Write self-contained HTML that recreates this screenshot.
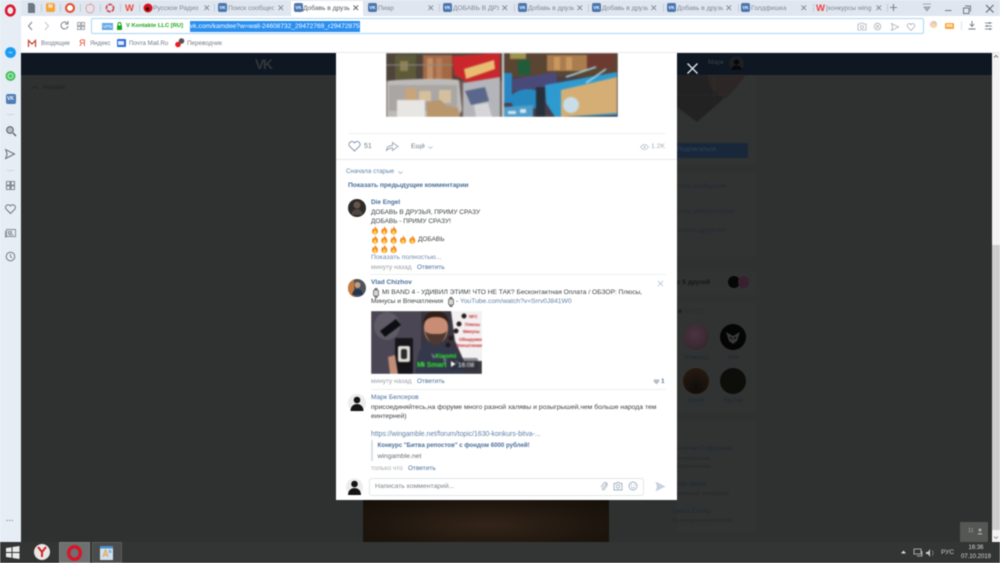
<!DOCTYPE html>
<html><head><meta charset="utf-8"><style>
*{box-sizing:border-box}
html,body{margin:0;padding:0;width:1000px;height:563px;overflow:hidden;background:#fff;font-family:"Liberation Sans","Noto Sans CJK SC",sans-serif}
#w{position:relative;width:1000px;height:563px;overflow:hidden;filter:blur(.45px)}
.a{position:absolute;white-space:nowrap}
.tab{position:absolute;top:0;height:16px;font-size:6.6px;line-height:17px;color:#7d8794;white-space:nowrap;overflow:hidden}
.vk{position:absolute;top:3px;width:9px;height:9px;border-radius:2px;background:#4a76b0;color:#fff;font-size:4.5px;line-height:9px;text-align:center;font-weight:bold}
.x{position:absolute;top:1px;font-size:9px;line-height:15px;color:#7b8490}
.sep{position:absolute;top:4px;width:1px;height:8px;background:#c3ccd8}
.t{font-size:6.7px;color:#333;line-height:9px}
.l{color:#4a6f9c}
.g{color:#9a9ea4}
.d{color:#3d4144}
.bm{font-size:6.1px;line-height:9px;color:#737a83;top:39px}
svg{position:absolute;overflow:visible}
</style></head><body><div id="w">

<!-- chrome -->
<div class="a" style="left:0;top:0;width:1000px;height:16px;background:#dfe6ef"></div>
<div class="a" style="left:0;top:0;width:21px;height:543px;background:#e6edf5"></div>
<div class="a" style="left:21px;top:16px;width:979px;height:36px;background:#fff"></div>
<div class="a" style="left:21px;top:52px;width:979px;height:1px;background:#e5e8ec"></div>

<!-- opera logo -->
<svg style="left:4px;top:4px" width="13" height="14"><ellipse cx="6.3" cy="6.5" rx="4.2" ry="4.8" fill="none" stroke="#e0162b" stroke-width="2.6"/></svg>

<!-- tab strip icons -->
<svg style="left:27px;top:3px" width="9" height="10"><path d="M1 0h5l2 2v8H1z" fill="#6d7783"/></svg>
<div class="sep" style="left:41px"></div>
<div class="a" style="left:46px;top:3px;width:9px;height:9px;background:#f4a53a;border-radius:2px;color:#fff;font-size:5px;line-height:9px;text-align:center;font-weight:bold">M</div>
<div class="sep" style="left:60px"></div>
<svg style="left:65px;top:3px" width="10" height="10"><circle cx="5" cy="5" r="4" fill="#fff" stroke="#e8482a" stroke-width="2"/></svg>
<div class="sep" style="left:80px"></div>
<svg style="left:85px;top:3px" width="10" height="10"><path d="M5 2C3 1 1 2 1 5s2 5 3 5l1-.5L6 10c1 0 3-2 3-5S7 1 5 2zM5 2l1-2" fill="none" stroke="#e79a98" stroke-width=".9"/></svg>
<div class="sep" style="left:100px"></div>
<svg style="left:105px;top:3px" width="10" height="10"><circle cx="5" cy="5" r="3.6" fill="none" stroke="#d5424b" stroke-width="1.6" stroke-dasharray="4 1"/></svg>
<div class="sep" style="left:120px"></div>
<div class="a" style="left:125px;top:3px;color:#f0473e;font-size:9.5px;font-weight:bold;line-height:11px">W</div>
<div class="sep" style="left:139px"></div>

<!-- tabs -->
<svg style="left:143px;top:3px" width="10" height="10"><circle cx="5" cy="5" r="4.5" fill="#d8131c"/><circle cx="4.5" cy="6" r="1.8" fill="#3a1010"/></svg>
<div class="tab" style="left:153px;width:46px">Русское Радио –</div>
<div class="x" style="left:203px">✕</div>
<div class="sep" style="left:214px"></div>
<div class="vk" style="left:218px">VK</div>
<div class="tab" style="left:228px;width:46px">Поиск сообщес</div>
<div class="x" style="left:277px">✕</div>
<div class="a" style="left:291px;top:1px;width:72px;height:15px;background:#fff"></div>
<div class="vk" style="left:294px">VK</div>
<div class="tab" style="left:303px;width:47px;color:#4e5661">Добавь в друзья</div>
<div class="x" style="left:352px;color:#555">✕</div>
<div class="vk" style="left:368px">VK</div>
<div class="tab" style="left:378px;width:40px">Пиар</div>
<div class="x" style="left:427px">✕</div>
<div class="sep" style="left:439px"></div>
<div class="vk" style="left:443px">VK</div>
<div class="tab" style="left:453px;width:46px">ДОБАВЬ В ДРУЗ</div>
<div class="x" style="left:501px">✕</div>
<div class="sep" style="left:514px"></div>
<div class="vk" style="left:518px">VK</div>
<div class="tab" style="left:528px;width:46px">Добавь в друзья</div>
<div class="x" style="left:576px">✕</div>
<div class="sep" style="left:588px"></div>
<div class="vk" style="left:592px">VK</div>
<div class="tab" style="left:602px;width:46px">Добавь в друзья</div>
<div class="x" style="left:650px">✕</div>
<div class="sep" style="left:663px"></div>
<div class="vk" style="left:667px">VK</div>
<div class="tab" style="left:677px;width:46px">Добавь в друзья</div>
<div class="x" style="left:725px">✕</div>
<div class="sep" style="left:738px"></div>
<div class="vk" style="left:741px">VK</div>
<div class="tab" style="left:751px;width:46px">Голдфишка</div>
<div class="x" style="left:800px">✕</div>
<div class="sep" style="left:813px"></div>
<div class="a" style="left:816px;top:3px;color:#ef3f3f;font-size:9.5px;font-weight:bold;line-height:11px">W</div>
<div class="tab" style="left:826px;width:46px">[конкурсы wing</div>
<div class="x" style="left:875px">✕</div>
<div class="sep" style="left:887px"></div>
<svg style="left:889px;top:3px" width="9" height="9"><path d="M4.5 1v7M1 4.5h7" stroke="#7a8491" stroke-width="1.1"/></svg>
<svg style="left:923px;top:3px" width="9" height="9"><path d="M0 1h8M1 4h6l-3 4z" stroke="#8d96a1" fill="#aab2bc" stroke-width=".8"/></svg>
<svg style="left:945px;top:5px" width="80" height="10"><path d="M0 5.500h6.500" stroke="#727b86" stroke-width="1"/><path d="M20 1h5.500v5.500M18.500 3h5.500v5.500h-5.500z" stroke="#727b86" fill="none" stroke-width="1"/><path d="M41 0l7.500 7.500M48.500 0l-7.500 7.500" stroke="#5e6771" stroke-width="1.1"/></svg>

<!-- nav -->
<svg style="left:27px;top:21px" width="70" height="10"><path d="M5 1L1.500 5 5 9" stroke="#7b8490" fill="none" stroke-width="1"/><path d="M18 1l3.500 4L18 9" stroke="#c3c9d0" fill="none" stroke-width="1"/><path d="M40 2a3.500 3.500 0 1 0 1 3M41 0v3h-3" stroke="#7b8490" fill="none" stroke-width="1"/></svg>
<svg style="left:77px;top:22px" width="8" height="8"><path d="M.5.500h3v3h-3zM4.500.500h3v3h-3zM.5 4.500h3v3h-3zM4.500 4.500h3v3h-3z" stroke="#80888f" fill="none" stroke-width=".7"/></svg>
<div class="a" style="left:91px;top:18px;width:833px;height:16px;border:1px solid #a9d6f7;border-radius:2px;background:#fff"></div>
<div class="a" style="left:102px;top:23px;width:11px;height:7px;background:#5ea7e8;color:#fff;font-size:4.5px;line-height:7px;text-align:center">VPN</div>
<svg style="left:116px;top:22px" width="7" height="8"><path d="M1 3.500h5V8H1z" fill="#1ea51d"/><path d="M2 3.500V2a1.500 1.500 0 0 1 3 0v1.500" stroke="#1ea51d" fill="none"/></svg>
<div class="a" style="left:126px;top:21px;font-size:5.8px;line-height:11px;font-weight:bold;color:#1ea51d">V Kontakte LLC [RU]</div>
<div class="a" style="left:189.5px;top:21px;width:170px;height:11px;background:#2b8ff0"></div>
<div class="a" style="left:190px;top:21px;font-size:6.6px;line-height:11px;color:#fff">vk.com/kamdee?w=wall-24608732_29472769_r29472875</div>
<svg style="left:857px;top:22px" width="100" height="10"><path d="M1 2h2l1-1h2l1 1h2v6H1z" stroke="#aab1b9" fill="none" stroke-width=".8"/><circle cx="5" cy="5" r="1.500" fill="none" stroke="#aab1b9" stroke-width=".8"/><circle cx="20.500" cy="4.500" r="3.300" fill="none" stroke="#aab1b9" stroke-width=".8"/><path d="M19 3l3 3M22 3l-3 3" stroke="#aab1b9" stroke-width=".8"/><path d="M34.500 1.500l7 3.500-7 3.500 1.200-3.500z" stroke="#aab1b9" fill="none" stroke-width=".8"/><path d="M54 8.500l-3.500-3.700a2 2 0 0 1 3.500-2.200 2 2 0 0 1 3.500 2.200z" stroke="#aab1b9" fill="none" stroke-width=".8"/></svg>
<svg style="left:929px;top:20px" width="12" height="12"><circle cx="4.500" cy="4.500" r="3.500" fill="#f5c0c5"/><path d="M4 1a3.500 3.500 0 0 1 4 3z" fill="#86d8c1"/><circle cx="4.500" cy="6" r="2" fill="#f6e08f"/></svg>
<div class="a" style="left:945px;top:23px;width:9px;height:6px;background:#f6a53b;border-radius:1px;color:#fff;font-size:4.5px;line-height:6px;text-align:center;font-weight:bold">M6</div>
<div class="a" style="left:961px;top:21px;width:1px;height:9px;background:#dde1e5"></div>
<svg style="left:968px;top:21px" width="8" height="9"><path d="M4 0v5M1.800 3L4 5.500 6.200 3M.5 8h7" stroke="#6e7780" fill="none" stroke-width=".9"/></svg>
<svg style="left:985px;top:22px" width="8" height="8"><path d="M0 1h7M0 4h7M0 7h7" stroke="#8a919a"/><path d="M4.500 0v2M2 3v2M5 6v2" stroke="#6e7780"/></svg>

<!-- bookmarks -->
<svg style="left:28px;top:40px" width="8" height="7"><path d="M.5 7V.5L4 4 7.500.500V7" fill="none" stroke="#c8392e" stroke-width="1.2"/></svg>
<div class="a bm" style="left:41px">Входящие</div>
<div class="a" style="left:79px;top:38px;color:#e8432d;font-size:9px;line-height:11px">Я</div>
<div class="a bm" style="left:90px">Яндекс</div>
<div class="a" style="left:116.5px;top:39px;width:9px;height:8px;background:#2a6bd9;border-radius:1px"></div>
<div class="a" style="left:118px;top:41px;width:6px;height:4px;background:#dfe9fb"></div>
<div class="a bm" style="left:129px">Почта Mail.Ru</div>
<svg style="left:175px;top:38px" width="10" height="10"><circle cx="3" cy="6.500" r="2.800" fill="#ec1c24"/><circle cx="6.500" cy="3" r="2.800" fill="#555"/></svg>
<div class="a bm" style="left:187px;font-size:6.3px">Переводчик</div>

<!-- sidebar icons -->
<svg style="left:4px;top:45.500px" width="14" height="14"><circle cx="6.500" cy="6.500" r="5.400" fill="#1a9cf0"/><path d="M3.800 7.500l2-2 1.500 1.200 2-1.500-2 2.300-1.500-1.200z" fill="#fff"/></svg>
<svg style="left:4px;top:70px" width="14" height="14"><circle cx="6.500" cy="6" r="5" fill="#43c15d"/><circle cx="6.500" cy="6" r="2.400" fill="none" stroke="#d9f5de"/></svg>
<div class="a" style="left:5.5px;top:94px;width:10px;height:10px;background:#4c7bb6;border-radius:2px;color:#fff;font-size:5px;line-height:10px;text-align:center;font-weight:bold">VK</div>
<div class="a" style="left:7px;top:114px;width:7px;height:1px;background:#cfd6de"></div>
<svg style="left:5px;top:125px" width="12" height="12"><circle cx="5" cy="5" r="3.300" fill="#b6bcc4" stroke="#5d6670" stroke-width="1.1"/><path d="M8 8l3 3" stroke="#5d6670" stroke-width="1.500"/></svg>
<svg style="left:5px;top:149px" width="11" height="11"><path d="M.7.700L9.500 5 .7 9.500l1.400-4.500z" fill="none" stroke="#636c76"/></svg>
<div class="a" style="left:7px;top:170px;width:7px;height:1px;background:#cfd6de"></div>
<svg style="left:6px;top:181px" width="9" height="9"><path d="M.5.500h3.500v3.500H.5zM5 .5h3.500v3.500H5zM.5 5h3.500v3.500H.5zM5 5h3.500v3.500H5z" fill="none" stroke="#636c76" stroke-width=".8"/></svg>
<svg style="left:5px;top:204px" width="11" height="10"><path d="M5.500 9.500L1 5a2.500 2.500 0 0 1 4.500-3A2.500 2.500 0 0 1 10 5z" fill="none" stroke="#636c76" stroke-width=".9"/></svg>
<svg style="left:5px;top:228px" width="11" height="10"><path d="M1.500 1.500h9v7h-9zM.5 3v6h1M3.500 3.500h3v2h-3zM3.500 6.800h5" fill="none" stroke="#636c76" stroke-width=".7"/></svg>
<svg style="left:5px;top:251px" width="11" height="11"><circle cx="5.500" cy="5.500" r="4.300" fill="none" stroke="#636c76" stroke-width=".9"/><path d="M5.500 3v2.800l1.800 1" fill="none" stroke="#636c76" stroke-width=".8"/></svg>
<div class="a" style="left:6px;top:518px;color:#70777f;font-size:7px;letter-spacing:.3px;line-height:8px;font-weight:bold">···</div>

<!-- page dim -->
<div class="a" style="left:21px;top:53px;width:971px;height:490px;background:#2f3130"></div>
<div class="a" style="left:21px;top:53px;width:971px;height:22px;background:#0e1722"></div>
<div class="a" style="left:255px;top:57px;color:#33373b;font-size:14px;line-height:15px;font-weight:bold;letter-spacing:-1.500px">VK</div>
<svg style="left:31px;top:85px" width="8" height="5"><path d="M.5 4L4 1l3.500 3" fill="none" stroke="#232526"/></svg>
<div class="a" style="left:43px;top:83px;font-size:6.5px;line-height:9px;color:#1f2122">Назара</div>
<div class="a" style="left:708px;top:58px;font-size:6.5px;line-height:9px;color:#3c4147">Марк</div>
<svg style="left:729px;top:56px" width="16" height="16"><circle cx="7.500" cy="7.500" r="7.500" fill="#1d2023"/><circle cx="7.500" cy="6" r="2.800" fill="#070809"/><path d="M2.500 14c0-4 3-4.500 5-4.500s5 .5 5 4.500z" fill="#070809"/></svg>
<svg style="left:687px;top:63px" width="11" height="11"><path d="M.5.500l10 10M10.500.500l-10 10" stroke="#dfe3e6" stroke-width="1.4"/></svg>

<!-- right column panels -->
<div class="a" style="left:677px;top:75px;width:80px;height:90px;background:#313332"></div>
<svg style="left:677px;top:75px;filter:blur(.6px)" width="88" height="50"><path d="M0 0h68C60 12 40 30 20 47L0 32z" fill="#222222"/><path d="M30 0h38C64 8 56 16 48 24L34 14z" fill="#2c2725"/><path d="M37 0v33M0 20h48" stroke="#353535" stroke-width=".4"/></svg>
<div class="a" style="left:677px;top:143px;width:71px;height:15px;background:#182739;border-radius:0 2px 2px 0"></div>
<div class="a" style="left:677px;top:145px;font-size:6.5px;line-height:10px;color:#34465a">Подписаться</div>
<div class="a" style="left:677px;top:173px;width:80px;height:84px;background:#313332"></div>
<div class="a" style="left:678px;top:182px;font-size:6.5px;line-height:10px;color:#1d2a3a">сать сообщение</div>
<div class="a" style="left:678px;top:207px;font-size:6.6px;line-height:10px;color:#222a33">чать уведомления</div>
<div class="a" style="left:678px;top:226px;font-size:6.6px;line-height:10px;color:#222a33">казать друзьям</div>
<div class="a" style="left:677px;top:271px;width:80px;height:24px;background:#313332"></div>
<div class="a" style="left:677px;top:278px;font-size:6.5px;line-height:10px;color:#141618;font-weight:bold">с 5 друзей</div>
<div class="a" style="left:728px;top:276px;width:12px;height:12px;border-radius:50%;background:#060606"></div>
<div class="a" style="left:738px;top:276px;width:11px;height:12px;border-radius:50%;background:#38202e"></div>
<div class="a" style="left:677px;top:302px;width:80px;height:110px;background:#313332"></div>
<div class="a" style="left:678px;top:307px;font-size:6.5px;line-height:10px;color:#141618;font-weight:bold">и <span style="color:#2a2d2f;font-weight:normal">664232</span></div>
<div class="a" style="left:683px;top:324px;width:26px;height:26px;border-radius:50%;background:radial-gradient(circle at 45% 40%,#4a3440,#2f2229)"></div>
<div class="a" style="left:720px;top:324px;width:26px;height:26px;border-radius:50%;background:#050505"></div>
<svg style="left:726px;top:331px" width="14" height="14"><path d="M0 1l7 4 7-4-3 9-4 3-4-3z" fill="#383838"/><path d="M4 6l2 2M10 6l-2 2" stroke="#050505"/></svg>
<div class="a" style="left:683px;top:354px;width:26px;text-align:center;font-size:6px;line-height:9px;color:#1c2936">Жамшид</div>
<div class="a" style="left:720px;top:354px;width:26px;text-align:center;font-size:6px;line-height:9px;color:#1c2936">Alex</div>
<div class="a" style="left:683px;top:368px;width:26px;height:26px;border-radius:50%;background:radial-gradient(circle at 50% 80%,#0f0c0a,#2b1d12)"></div>
<div class="a" style="left:720px;top:368px;width:26px;height:26px;border-radius:50%;background:#0d0d0a"></div>
<div class="a" style="left:683px;top:397px;width:26px;text-align:center;font-size:6px;line-height:9px;color:#1c2936">Денис</div>
<div class="a" style="left:720px;top:397px;width:26px;text-align:center;font-size:6px;line-height:9px;color:#1c2936">Руслан</div>
<div class="a" style="left:677px;top:421px;width:80px;height:112px;background:#313332"></div>
<div class="a" style="left:677px;top:444px;font-size:6.5px;line-height:10px;color:#1c2936">чеслав Софронов</div>
<div class="a" style="left:677px;top:455px;font-size:5.8px;line-height:9px;color:#25282a">интересным</div>
<div class="a" style="left:677px;top:463px;font-size:5.8px;line-height:9px;color:#25282a">едложениям</div>
<div class="a" style="left:677px;top:480px;font-size:6.5px;line-height:10px;color:#1c2936">stle Media</div>
<div class="a" style="left:677px;top:490px;font-size:5.8px;line-height:9px;color:#25282a">ктамный менеджер</div>
<div class="a" style="left:672px;top:507px;font-size:6.5px;line-height:10px;color:#1c2936">Света Скляр</div>
<div class="a" style="left:672px;top:517px;font-size:5.8px;line-height:9px;color:#25282a">По вопросам контента</div>
<!-- lower centre hint image -->
<div class="a" style="left:363px;top:500px;width:246px;height:42px;background:radial-gradient(ellipse at 50% 60%,#33241a 0%,#1f170f 60%,#141009 100%)"></div>
<!-- scrollbar -->
<div class="a" style="left:992px;top:53px;width:8px;height:490px;background:#f3f3f3"></div>
<div class="a" style="left:992px;top:245px;width:8px;height:285px;background:#cdcdcd"></div>
<svg style="left:993px;top:54px" width="6" height="5"><path d="M1 3.500L3 1.500l2 2" fill="none" stroke="#777"/></svg>
<svg style="left:993px;top:535px" width="6" height="5"><path d="M1 1.500L3 3.500l2-2" fill="none" stroke="#999"/></svg>
<div class="a" style="left:960px;top:522px;width:28px;height:20px;background:#555755;border-radius:1px"></div>
<div class="a" style="left:968px;top:527px;font-size:5.5px;line-height:9px;color:#a8aaa8">11</div>
<svg style="left:977px;top:528px" width="6" height="7"><circle cx="3" cy="2" r="1.500" fill="#a8aaa8"/><path d="M.5 6.500c0-2 5-2 5 0z" fill="#a8aaa8"/></svg>

<!-- modal -->
<div class="a" style="left:336px;top:53px;width:341px;height:447px;background:#fff"></div>
<!-- photos -->
<div class="a" style="left:386px;top:53px;width:232px;height:64px;overflow:hidden">
<svg style="left:0;top:0;filter:blur(.9px)" width="232" height="64">
<rect width="116" height="64" fill="#6a5a55"/>
<rect x="0" y="0" width="116" height="28" fill="#4e443a"/>
<rect x="9" y="2" width="21" height="24" fill="#5d5a3a"/>
<rect x="14" y="8" width="8" height="10" fill="#8c8050"/>
<rect x="37" y="2" width="29" height="25" fill="#a06a48"/>
<rect x="41" y="5" width="6" height="21" fill="#c28c64"/><rect x="50" y="5" width="6" height="21" fill="#b87c56"/><rect x="59" y="5" width="5" height="21" fill="#a8683f"/>
<path d="M0 12h80" stroke="#8c8a88" stroke-width="1"/>
<path d="M66 3L114 0v25L85 31 68 22z" fill="#c9272b"/>
<path d="M78 16l30-9 1 9-29 10z" fill="#e8bd72"/>
<path d="M1 28c12-2 60-3 72-1l3 30-4 7H1z" fill="#bdbbb9"/>
<path d="M3 32h68v26H3z" fill="#a9a6a3"/>
<rect x="19" y="35" width="12" height="13" fill="#c6a47c"/><rect x="33" y="38" width="12" height="10" fill="#d6bf9c"/><rect x="53" y="37" width="12" height="13" fill="#d4c0a0"/>
<path d="M41 49l14-2 5 6 12 2 2 9H41z" fill="#b9966c"/>
<rect x="11" y="47" width="28" height="17" fill="#e8e6e3"/>
<path d="M77 30l37-6v40H77z" fill="#b4b5ba"/>
<path d="M79 38l20-4 4 14-18 4z" fill="#5b678a"/>
<path d="M88 52l14-2 4 14H90z" fill="#d6d6d8"/>
<rect x="118" y="0" width="114" height="64" fill="#463f4a"/>
<rect x="118" y="0" width="114" height="24" fill="#594532"/>
<rect x="124" y="0" width="16" height="6" fill="#9f9350"/>
<rect x="132" y="7" width="12" height="15" fill="#1f5d3a"/>
<rect x="161" y="2" width="40" height="16" fill="#ab7c4e"/>
<rect x="168" y="4" width="6" height="13" fill="#c9985f"/><rect x="180" y="4" width="6" height="13" fill="#c9985f"/>
<rect x="201" y="0" width="27" height="16" fill="#6d3a30"/>
<rect x="117" y="20" width="9" height="30" fill="#2a87c4"/>
<path d="M127 26l43-7 1 14-44 5z" fill="#4a4a7a"/>
<path d="M126 42c6-7 22-7 28-3l1 15c-8 3-24 3-29-2z" fill="#2589c0"/>
<path d="M117 54l30-2v12h-30z" fill="#4f9cc9"/>
<path d="M122 58h8v3h-8zM134 56h6v4h-6z" fill="#d3e6f1"/>
<rect x="150" y="34" width="9" height="30" fill="#27303a"/>
<path d="M159 32l72-13v43l-62 2-9-14z" fill="#2f9ad0"/>
<path d="M175 37l56-13v36l-56 4z" fill="#d4ae74"/>
<path d="M180 24l30-10M200 30l20-14" stroke="#a8dcf2" stroke-width="1.500"/>
<circle cx="185" cy="52" r="8" fill="#c8dde8"/>
<rect x="116" width="2" height="64" fill="#d8d8d8"/>
</svg></div>

<div class="a" style="left:349px;top:133px;width:316px;height:1px;background:#eceef1"></div>
<svg style="left:348px;top:140px" width="13" height="12"><path d="M6.500 11L1.300 6A3 3 0 0 1 6.500 3a3 3 0 0 1 5.200 3z" fill="none" stroke="#8a9bb0" stroke-width="1"/></svg>
<div class="a" style="left:364px;top:142px;font-size:7px;line-height:10px;color:#727a84">51</div>
<svg style="left:386px;top:141px" width="13" height="11"><path d="M.5 9.500c0-3 2-5 6-5V1.500l5.500 4-5.500 4V7c-2 0-4 .5-6 2.500z" fill="none" stroke="#9aa7b6" stroke-width=".9"/></svg>
<div class="a" style="left:411px;top:142px;font-size:6.8px;line-height:10px;color:#727a84">Ещё</div>
<svg style="left:428px;top:146px" width="5" height="3"><path d="M.5.500L2.500 2.500 4.500.500" stroke="#a8b2bd" fill="none" stroke-width=".7"/></svg>
<svg style="left:640px;top:144px" width="9" height="6"><path d="M.5 3C2 1 3 .5 4.500.5S7 1 8.500 3C7 5 6 5.500 4.500 5.500S2 5 .5 3z" fill="none" stroke="#b5bcc4" stroke-width=".7"/><circle cx="4.500" cy="3" r="1" fill="#b5bcc4"/></svg>
<div class="a" style="left:651px;top:142px;font-size:6.8px;line-height:10px;color:#a4acb5">1.2K</div>
<div class="a" style="left:336px;top:159px;width:341px;height:1px;background:#e7e9ec"></div>

<div class="a" style="left:346px;top:166.500px;font-size:6.3px;line-height:10px;color:#5f82a8">Сначала старые</div>
<svg style="left:398px;top:170.500px" width="5" height="3"><path d="M.5.500L2.500 2.500 4.500.500" stroke="#93a4b6" fill="none" stroke-width=".7"/></svg>
<div class="a" style="left:348px;top:181px;font-size:6.8px;line-height:10px;color:#4a6f9c;font-weight:bold;letter-spacing:-.1px">Показать предыдущие комментарии</div>

<!-- comment 1 -->
<svg style="left:348px;top:199px" width="18" height="18"><circle cx="9" cy="9" r="9" fill="#2d2a28"/><circle cx="9" cy="6" r="3.500" fill="#66544a"/><path d="M3 16c1-5 4-6 6-6s5 1 6 6z" fill="#4d4641"/></svg>
<div class="a" style="left:371px;top:198px;font-size:6.4px;line-height:10px;color:#4a6f9c;font-weight:bold">Die Engel</div>
<div class="a d" style="left:371px;top:208px;font-size:6.5px;line-height:9px">ДОБАВЬ В ДРУЗЬЯ, ПРИМУ СРАЗУ</div>
<div class="a d" style="left:371px;top:217px;font-size:6.5px;line-height:9px">ДОБАВЬ - ПРИМУ СРАЗУ!</div>
<svg style="left:371px;top:225.500px" width="85" height="28"><defs><g id="f"><path d="M4 0c1 2 3 3 3 5.500A3 3 0 0 1 4 8.500a3 3 0 0 1-3-3C1 4 2 3 2 2c.7.500 1 1 1 1.500C3.500 2.500 4 1.500 4 0z" fill="#f58a1f"/><path d="M4 4c.8 1 1.600 1.500 1.600 2.500a1.600 1.600 0 0 1-3.200 0C2.400 5.500 3.500 5 4 4z" fill="#ffd34e"/></g></defs>
<use href="#f" x="0" y="0"/><use href="#f" x="9.300" y="0"/><use href="#f" x="18.600" y="0"/>
<use href="#f" x="0" y="9.300"/><use href="#f" x="9.300" y="9.300"/><use href="#f" x="18.600" y="9.300"/><use href="#f" x="28" y="9.300"/><use href="#f" x="37.300" y="9.300"/>
<use href="#f" x="0" y="18.600"/><use href="#f" x="9.300" y="18.600"/><use href="#f" x="18.600" y="18.600"/></svg>
<div class="a d" style="left:418px;top:235px;font-size:6.5px;line-height:9px">ДОБАВЬ</div>
<div class="a l" style="left:371px;top:252.500px;font-size:6.8px;line-height:9px;color:#6f8eb0">Показать полностью...</div>
<div class="a g" style="left:371px;top:262.500px;font-size:6.5px;line-height:9px">минуту назад</div>
<div class="a l" style="left:417px;top:262.500px;font-size:6.5px;line-height:9px">Ответить</div>
<div class="a" style="left:371px;top:274px;width:295px;height:1px;background:#eceef1"></div>

<!-- comment 2 -->
<svg style="left:348px;top:279px" width="18" height="18"><circle cx="9" cy="9" r="9" fill="#4a5560"/><path d="M0 9A9 9 0 0 1 6 .5V18A9 9 0 0 1 0 9z" fill="#c77c3f"/><circle cx="9.500" cy="6" r="3" fill="#c79a7a"/><path d="M4 16c1-5 3-6 5.500-6s4.500 1 5.500 6z" fill="#27364c"/></svg>
<div class="a" style="left:371px;top:278px;font-size:6.5px;line-height:10px;color:#4a6f9c;font-weight:bold">Vlad Chizhov</div>
<svg style="left:657px;top:280px" width="7" height="7"><path d="M1 1l5 5M6 1L1 6" stroke="#bfd0df" stroke-width="1"/></svg>
<svg style="left:373px;top:288px" width="6" height="10"><rect x=".5" y="2" width="5" height="6" rx="1" fill="#d5d5d5" stroke="#555" stroke-width=".7"/><rect x="1.500" y="0" width="3" height="2" fill="#777"/><rect x="1.500" y="8" width="3" height="2" fill="#777"/></svg>
<div class="a d" style="left:382px;top:288px;font-size:6.65px;line-height:9px">MI BAND 4 - УДИВИЛ ЭТИМ! ЧТО НЕ ТАК? Бесконтактная Оплата / ОБЗОР: Плюсы,</div>
<div class="a t d" style="left:371px;top:297px">Минусы и Впечатления</div>
<svg style="left:448px;top:297px" width="6" height="10"><rect x=".5" y="2" width="5" height="6" rx="1" fill="#d5d5d5" stroke="#555" stroke-width=".7"/><rect x="1.500" y="0" width="3" height="2" fill="#777"/><rect x="1.500" y="8" width="3" height="2" fill="#777"/></svg>
<div class="a t" style="left:456px;top:297px;color:#333">- <span style="color:#5f82a8">YouTube.com/watch?v=Srrv0J841W0</span></div>

<!-- video thumb -->
<div class="a" style="left:371px;top:311px;width:111px;height:63px;overflow:hidden">
<svg style="left:0;top:0;filter:blur(.4px)" width="111" height="63">
<rect width="111" height="63" fill="#3a3640"/>
<rect width="50" height="63" fill="#4b4654"/>
<path d="M80 0h31v50H93L84 30z" fill="#f2f0f0"/>
<ellipse cx="16" cy="15" rx="13" ry="14" fill="#5e5a66"/>
<path d="M9 20l16-12 5 6-16 12z" fill="#0d0e13"/>
<path d="M44 63C46 42 50 32 58 30h16c8 3 16 14 18 33z" fill="#33394a"/>
<path d="M50 50l4 3-3 3zM60 42l5 3-3 3zM72 46l4 3-3 3zM84 48l4 3-3 3z" fill="#6a7286"/>
<ellipse cx="65" cy="17" rx="12" ry="16" fill="#c98d74"/>
<path d="M52 14c0-10 6-14 13-14s13 4 13 14c-3-6-6-8-13-8s-10 2-13 8z" fill="#2d2019"/>
<path d="M54 20c2 8 6 14 11 14s9-6 11-14c-3 3-6 3-11 3s-8 0-11-3z" fill="#4d392f"/>
<rect x="24" y="27" width="18" height="36" rx="1" fill="#16161a"/>
<rect x="27" y="35" width="12" height="16" rx="2" fill="#e2dfd8"/>
<rect x="30" y="38" width="6" height="10" rx="2" fill="#2b2b2b"/>
<path d="M17 46l7-2 3 19H19z" fill="#c18e78"/>
<g fill="#26181c"><circle cx="93" cy="5" r="2.500"/><circle cx="88" cy="13" r="2.500"/><circle cx="85" cy="20" r="2.500"/><circle cx="80" cy="27" r="2.500"/><circle cx="77" cy="34" r="2.500"/></g>
<g font-family="Liberation Sans,sans-serif" font-size="4.2" fill="#c8222a" font-weight="bold">
<text x="98" y="7">NFC</text><text x="94" y="15">Плюсы</text><text x="92" y="22">Минусы</text><text x="88" y="30">Обнаружен</text><text x="85" y="36">Впечатления</text></g>
<rect x="79" y="47" width="28" height="12" rx="2" fill="#2a2f38" opacity=".55"/>
<text x="64" y="47" font-family="Liberation Sans,sans-serif" font-size="6.5" fill="#2ee82b" font-weight="bold">Xiaomi</text>
<text x="46" y="56" font-family="Liberation Sans,sans-serif" font-size="7" fill="#2ee82b" font-weight="bold">Mi Smart</text>
<path d="M80 50l4.500 3-4.500 3z" fill="#fff"/>
<text x="87" y="56" font-family="Liberation Sans,sans-serif" font-size="6.5" fill="#fff">16:08</text>
</svg></div>
<div class="a g" style="left:371px;top:377px;font-size:6.5px;line-height:9px">минуту назад</div>
<div class="a l" style="left:417px;top:377px;font-size:6.5px;line-height:9px">Ответить</div>
<svg style="left:653px;top:378px" width="7" height="7"><path d="M3.500 6.500L.7 3.500A1.600 1.600 0 0 1 3.500 2 1.600 1.600 0 0 1 6.300 3.500z" fill="#b5bcc5"/></svg>
<div class="a" style="left:661px;top:376.500px;font-size:6.5px;line-height:9px;color:#717982;font-weight:bold">1</div>
<div class="a" style="left:371px;top:388.500px;width:295px;height:1px;background:#eceef1"></div>

<!-- comment 3 -->
<svg style="left:348px;top:394px" width="18" height="18"><circle cx="9" cy="9" r="9" fill="#ececec"/><circle cx="9" cy="6" r="3.300" fill="#151515"/><path d="M2.500 17c0-5 3.500-7 6.500-7s6.500 2 6.500 7z" fill="#151515"/></svg>
<div class="a" style="left:371px;top:393px;font-size:6.7px;line-height:10px;color:#4a6f9c">Марк Белсеров</div>
<div class="a d" style="left:371px;top:402.500px;font-size:6.8px;line-height:9px">присоединяйтесь,на форуме много разной халявы и розыгрышей,чем больше народа тем</div>
<div class="a d" style="left:371px;top:412px;font-size:6.8px;line-height:9px">еинтерней)</div>
<div class="a" style="left:371px;top:430px;font-size:6.9px;line-height:9px;color:#5f82a8">https://wingamble.net/forum/topic/1630-konkurs-bitva-...</div>
<div class="a" style="left:371px;top:440px;width:2px;height:21px;background:#dde3ea"></div>
<div class="a" style="left:377.5px;top:440.500px;font-size:6.1px;line-height:9px;color:#4a6f9c;font-weight:bold">Конкурс "Битва репостов" с фондом 6000 рублей!</div>
<div class="a" style="left:377.5px;top:452px;font-size:6.8px;line-height:9px;color:#666c73">wingamble.net</div>
<div class="a g" style="left:371px;top:463.500px;font-size:6.5px;line-height:9px;color:#a6aab0">только что</div>
<div class="a l" style="left:408px;top:463.500px;font-size:6.5px;line-height:9px">Ответить</div>

<!-- composer -->
<svg style="left:346px;top:478px" width="17" height="18"><circle cx="8.500" cy="9" r="8.500" fill="#ececec"/><circle cx="8.500" cy="6" r="3.300" fill="#151515"/><path d="M2 17c0-5 3.500-7 6.500-7s6.500 2 6.500 7z" fill="#151515"/></svg>
<div class="a" style="left:369px;top:477.500px;width:275px;height:18px;border:1px solid #e2e5e9;border-radius:3px;background:#fff"></div>
<div class="a" style="left:375px;top:481.500px;font-size:6.8px;line-height:9px;color:#7e848b">Написать комментарий...</div>
<svg style="left:600px;top:481px" width="8" height="10"><path d="M6.500 2.500L2.500 7.500a1 1 0 0 0 1.500 1.200L7 4.500a2 2 0 0 0-3-2.500L1 6" fill="none" stroke="#9fb0c2" stroke-width=".9"/></svg>
<svg style="left:613px;top:481px" width="10" height="10"><path d="M1 2.500h2L4 1.500h2l1 1h2v6.500H1z" fill="none" stroke="#9fb0c2" stroke-width=".9"/><circle cx="5" cy="5.500" r="1.700" fill="none" stroke="#9fb0c2" stroke-width=".9"/></svg>
<svg style="left:628px;top:481px" width="10" height="10"><circle cx="5" cy="5" r="4" fill="none" stroke="#9fb0c2" stroke-width=".9"/><circle cx="3.500" cy="4" r=".6" fill="#9fb0c2"/><circle cx="6.500" cy="4" r=".6" fill="#9fb0c2"/><path d="M3 6c1 1.200 3 1.200 4 0" fill="none" stroke="#9fb0c2" stroke-width=".7"/></svg>
<svg style="left:655px;top:481px" width="11" height="11"><path d="M.5.500L10.500 5.500.5 10.500l1.500-5z" fill="#c7d2dd"/></svg>

<!-- taskbar -->
<div class="a" style="left:0;top:542px;width:1000px;height:21px;background:#333534"></div>
<svg style="left:6px;top:546px" width="14" height="13"><path d="M0 2l5.500-.8V6H0zM6.500 1l7-1v6h-7zM0 7h5.500v4.800L0 11zM6.500 7h7v6l-7-1z" fill="#e9eaea"/></svg>
<svg style="left:33px;top:543px" width="18" height="18"><circle cx="9" cy="9" r="8" fill="#e9e7e5"/><path d="M5 4l4 5 4-5M9 9v5" fill="none" stroke="#d8222a" stroke-width="2"/></svg>
<div class="a" style="left:59px;top:542px;width:31px;height:21px;background:#6f7170;border:1px solid #807f7f"></div>
<svg style="left:66px;top:545px" width="17" height="16"><ellipse cx="8.500" cy="8" rx="5.800" ry="6.300" fill="none" stroke="#d8152a" stroke-width="3.400"/></svg>
<div class="a" style="left:92px;top:542px;width:30px;height:21px;background:#4a4c4c;border:1px solid #5a5c5c"></div>
<svg style="left:100px;top:546px" width="14" height="14"><rect width="13" height="14" fill="#cfe0ef"/><rect width="13" height="2.500" fill="#4d8fcb"/><path d="M3 11l2.500-7L8 11M4 9h3" stroke="#ee9a3c" fill="none"/><rect x="8.500" y="4" width="3" height="3" fill="#8fb7db"/></svg>
<svg style="left:901px;top:550px" width="6" height="4"><path d="M0 3.500L2.500.5 5 3.500z" fill="#d8d8d8"/></svg>
<svg style="left:913px;top:548px" width="10" height="10"><path d="M1 1h7v5H1zM4 8h5V3" fill="none" stroke="#c8c8c8" stroke-width=".8"/></svg>
<svg style="left:926px;top:549px" width="9" height="8"><path d="M0 3h2l2-3v8L2 5H0z" fill="#d0d0d0"/><path d="M6 1.500c1.500 1.500 1.500 3.500 0 5" fill="none" stroke="#8a8a8a" stroke-width=".8"/></svg>
<div class="a" style="left:941px;top:548px;font-size:6.5px;line-height:10px;color:#c8c9c9">РУС</div>
<div class="a" style="left:960px;top:544px;width:32px;text-align:center;font-size:6px;line-height:9px;color:#dcdcdc">16:36</div>
<div class="a" style="left:960px;top:553px;width:32px;text-align:center;font-size:6px;line-height:9px;color:#dcdcdc">07.10.2019</div>

</div></body></html>
